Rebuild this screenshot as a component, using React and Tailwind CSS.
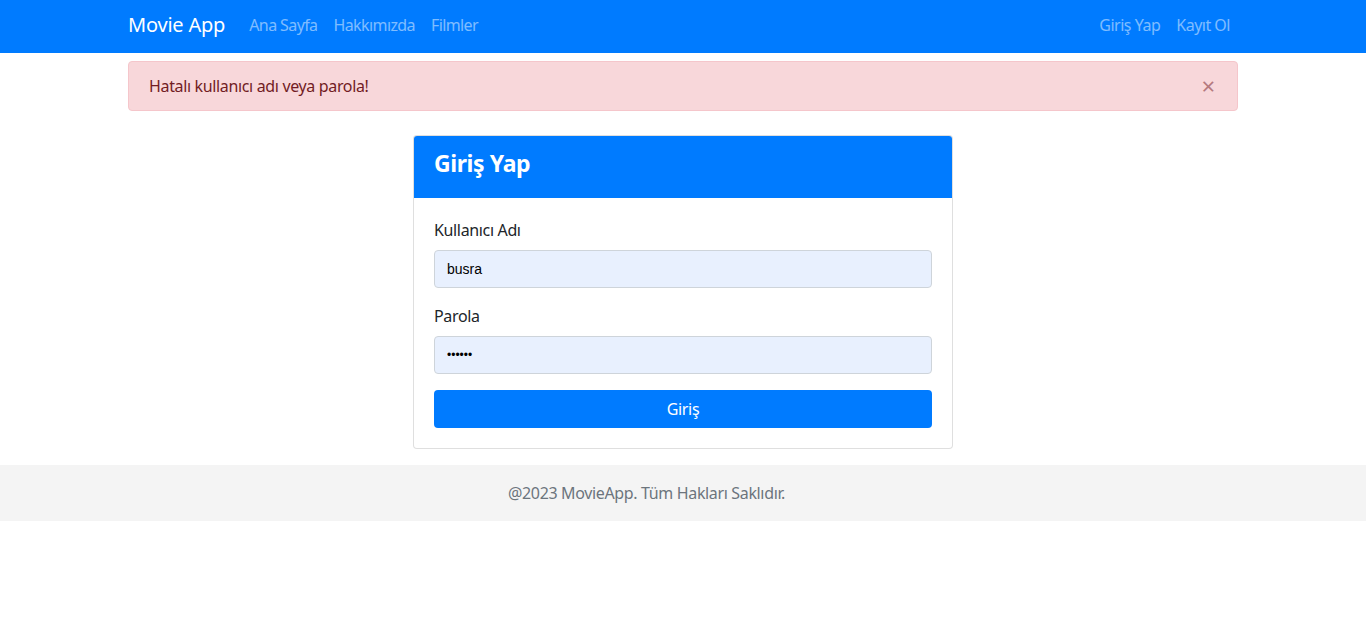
import React from 'react';

const font = { fontFamily: '"Segoe UI", "Noto Sans", sans-serif' };

export default function App() {
  return (
    <div className="min-h-[621px] bg-white text-[#212529] tracking-[-0.35px]" style={font}>
      <nav className="h-[53px] bg-[#007bff]">
        <div className="mx-auto flex h-full w-[1140px] items-center px-[15px] pb-[3px]">
          <a className="mr-4 text-[20px] leading-[30px] tracking-[-0.2px] text-white">Movie App</a>
          <ul className="flex text-[16px] tracking-[-0.6px] text-white/50">
            <li className="px-2">Ana Sayfa</li>
            <li className="px-2">Hakkımızda</li>
            <li className="px-2">Filmler</li>
          </ul>
          <ul className="ml-auto flex text-[16px] tracking-[-0.5px] text-white/50">
            <li className="px-2">Giriş Yap</li>
            <li className="px-2">Kayıt Ol</li>
          </ul>
        </div>
      </nav>

      <div className="mx-auto w-[1140px] px-[15px] pt-2">
        <div className="relative rounded border border-[#f5c6cb] bg-[#f8d7da] px-5 py-3 text-[16px] leading-6 text-[#721c24]">
          Hatalı kullanıcı adı veya parola!
          <button className="absolute right-0 top-0 px-[22px] py-3 text-[24px] font-normal leading-6 text-[#b5797f]">
            ×
          </button>
        </div>

        <div className="mt-6 flex justify-center pb-4">
          <div className="w-[540px] overflow-hidden rounded border border-black/[0.125] bg-white">
            <div className="bg-[#007bff] px-5 pb-[16px] pt-[8px]">
              <h3 className="text-[23px] font-bold leading-[38px] tracking-[-0.4px] text-white">Giriş Yap</h3>
            </div>
            <div className="p-5">
              <div className="mb-4">
                <label className="mb-2 block text-[16px] leading-6">Kullanıcı Adı</label>
                <input
                  readOnly
                  value="busra"
                  className="h-[38px] w-full rounded border border-[#ced4da] bg-[#e8f0fe] px-3 text-[14px] tracking-normal text-black outline-none"
                  style={{ fontFamily: 'Arial, "Liberation Sans", sans-serif' }}
                />
              </div>
              <div className="mb-4">
                <label className="mb-2 block text-[16px] leading-6">Parola</label>
                <input
                  readOnly
                  type="password"
                  value="123456"
                  className="h-[38px] w-full rounded border border-[#ced4da] bg-[#e8f0fe] px-3 text-[12px] tracking-normal text-black outline-none"
                  style={{ fontFamily: 'Arial, "Liberation Sans", sans-serif' }}
                />
              </div>
              <button className="h-[38px] w-full rounded bg-[#007bff] text-[16px] text-white">
                Giriş
              </button>
            </div>
          </div>
        </div>
      </div>

      <footer className="flex h-[56px] items-center bg-[#f4f4f4]">
        <div className="mx-auto w-[1140px] px-[15px] pl-[395px] text-[16px] text-[#6c757d]">
          @2023 MovieApp. Tüm Hakları Saklıdır.
        </div>
      </footer>
    </div>
  );
}
